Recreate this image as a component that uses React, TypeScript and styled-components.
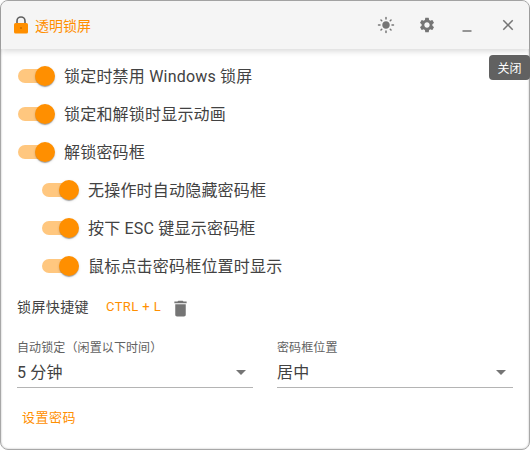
import React from "react";
import styled, { createGlobalStyle } from "styled-components";

const Global = createGlobalStyle`
  html, body { margin: 0; padding: 0; background: #fff; }
  body { width: 530px; height: 450px; overflow: hidden; font-family: Roboto, "Noto Sans CJK SC", sans-serif; }
`;

const Win = styled.div`
  position: relative;
  box-sizing: border-box;
  width: 530px;
  height: 450px;
  border: 1px solid #a8a8a8;
  border-radius: 8px;
  background: #fff;
  box-shadow: inset 0 0 2px rgba(0, 0, 0, 0.3);
  display: flex;
  flex-direction: column;
`;

const TitleBar = styled.header`
  flex: none;
  height: 48px;
  background: #f5f5f5;
  border-radius: 7px 7px 0 0;
  box-shadow: 0 2px 6px rgba(0, 0, 0, 0.16);
  display: flex;
  align-items: center;
  padding-left: 12px;
  position: relative;
  z-index: 1;
`;

const Title = styled.span`
  color: #ff8f00;
  font-size: 14px;
  margin-left: 6px;
  flex: 1;
`;

const IconSlot = styled.button<{ $w: number }>`
  border: 0;
  background: none;
  padding: 0;
  width: ${(p) => p.$w}px;
  height: 48px;
  display: flex;
  align-items: center;
  justify-content: center;
  color: #757575;
`;

const Tooltip = styled.div`
  position: absolute;
  top: 54px;
  right: -1px;
  width: 41px;
  height: 25px;
  border-radius: 4px;
  background: #616161;
  color: #fff;
  font-size: 12px;
  display: flex;
  align-items: center;
  justify-content: center;
  z-index: 2;
`;

const Body = styled.main`
  flex: 1;
  padding: 8px 15px 0 16px;
  display: flex;
  flex-direction: column;
`;

const Row = styled.label<{ $nested?: boolean }>`
  display: flex;
  align-items: center;
  height: 38px;
  padding-left: ${(p) => (p.$nested ? 25 : 1)}px;
  color: #424242;
  font-size: 16px;
  letter-spacing: 0.2px;
`;

const RowText = styled.span`
  margin-bottom: 2px;
`;

const Track = styled.span`
  position: relative;
  width: 34px;
  height: 14px;
  border-radius: 7px;
  background: #ffc77f;
  margin-right: 12px;
  flex: none;
`;

const Thumb = styled.span`
  position: absolute;
  right: -3px;
  top: -3px;
  width: 20px;
  height: 20px;
  border-radius: 50%;
  background: #ff8f00;
  box-shadow: 0 2px 1px -1px rgba(0,0,0,.2), 0 1px 1px rgba(0,0,0,.14), 0 1px 3px rgba(0,0,0,.12);
`;

const ShortcutRow = styled.div`
  display: flex;
  align-items: center;
  height: 38px;
  margin-top: 4px;
  font-size: 14px;
  letter-spacing: 0.4px;
  color: #424242;
`;

const ShortcutText = styled.span`
  margin-bottom: 4px;
`;

const Keys = styled.span`
  color: #ff8f00;
  font-size: 13px;
  letter-spacing: 0.4px;
  margin: 0 9px 3px 17px;
`;

const Fields = styled.div`
  display: grid;
  grid-template-columns: 236px 236px;
  column-gap: 24px;
  margin-top: 13px;
`;

const Field = styled.div`
  display: flex;
  flex-direction: column;
`;

const FieldLabel = styled.span`
  font-size: 12px;
  line-height: 16px;
  letter-spacing: 0.11px;
  color: #616161;
`;

const Select = styled.div`
  box-sizing: border-box;
  height: 32px;
  border-bottom: 1px solid #b4b4b4;
  display: flex;
  align-items: center;
  justify-content: space-between;
  font-size: 16px;
  letter-spacing: 0.15px;
  color: #424242;
`;

const SelectValue = styled.span`
  margin-bottom: 2px;
`;

const Link = styled.span`
  color: #ff8f00;
  font-size: 13px;
  letter-spacing: 0.5px;
  margin: 19px 0 0 5px;
`;

const Lock = () => (
  <svg width="16" height="18" viewBox="0 0 16 18">
    <path d="M4 8V5a4 4 0 0 1 8 0v3" fill="none" stroke="#5f5f5f" strokeWidth="1.6" />
    <rect x="1" y="7" width="14" height="10.5" rx="1.6" fill="#ff8f00" />
    <circle cx="8" cy="12" r="1" fill="#c96f00" />
  </svg>
);

const Sun = () => (
  <svg width="18" height="18" viewBox="0 0 24 24" fill="currentColor">
    <path d="M12 7c-2.76 0-5 2.24-5 5s2.24 5 5 5 5-2.24 5-5-2.24-5-5-5zM2 13h2c.55 0 1-.45 1-1s-.45-1-1-1H2c-.55 0-1 .45-1 1s.45 1 1 1zm18 0h2c.55 0 1-.45 1-1s-.45-1-1-1h-2c-.55 0-1 .45-1 1s.45 1 1 1zM11 2v2c0 .55.45 1 1 1s1-.45 1-1V2c0-.55-.45-1-1-1s-1 .45-1 1zm0 18v2c0 .55.45 1 1 1s1-.45 1-1v-2c0-.55-.45-1-1-1s-1 .45-1 1zM5.99 4.58a.996.996 0 0 0-1.41 0 .996.996 0 0 0 0 1.41l1.06 1.06c.39.39 1.03.39 1.41 0s.39-1.03 0-1.41L5.99 4.58zm12.37 12.37a.996.996 0 0 0-1.41 0 .996.996 0 0 0 0 1.41l1.06 1.06c.39.39 1.03.39 1.41 0a.996.996 0 0 0 0-1.41l-1.06-1.06zm1.06-10.96a.996.996 0 0 0 0-1.41.996.996 0 0 0-1.41 0l-1.06 1.06c-.39.39-.39 1.03 0 1.41s1.03.39 1.41 0l1.06-1.06zM7.05 18.36a.996.996 0 0 0 0-1.41.996.996 0 0 0-1.41 0l-1.06 1.06c-.39.39-.39 1.03 0 1.41s1.03.39 1.41 0l1.06-1.06z" />
  </svg>
);

const Gear = () => (
  <svg width="18" height="18" viewBox="0 0 24 24" fill="currentColor">
    <path d="M19.14 12.94c.04-.3.06-.61.06-.94 0-.32-.02-.64-.07-.94l2.03-1.58a.49.49 0 0 0 .12-.61l-1.92-3.32a.488.488 0 0 0-.59-.22l-2.39.96c-.5-.38-1.03-.7-1.62-.94l-.36-2.54a.484.484 0 0 0-.48-.41h-3.84c-.24 0-.43.17-.47.41l-.36 2.54c-.59.24-1.13.57-1.62.94l-2.39-.96c-.22-.08-.47 0-.59.22L2.74 8.87c-.12.21-.08.47.12.61l2.03 1.58c-.05.3-.09.63-.09.94s.02.64.07.94l-2.03 1.58a.49.49 0 0 0-.12.61l1.92 3.32c.12.22.37.29.59.22l2.39-.96c.5.38 1.03.7 1.62.94l.36 2.54c.05.24.24.41.48.41h3.84c.24 0 .44-.17.47-.41l.36-2.54c.59-.24 1.13-.56 1.62-.94l2.39.96c.22.08.47 0 .59-.22l1.92-3.32c.12-.22.07-.47-.12-.61l-2.01-1.58zM12 15.6c-1.98 0-3.6-1.62-3.6-3.6s1.62-3.6 3.6-3.6 3.6 1.62 3.6 3.6-1.62 3.6-3.6 3.6z" />
  </svg>
);

const Minimize = () => (
  <svg width="18" height="18" viewBox="0 0 24 24" fill="currentColor">
    <path d="M6 19h12v2H6z" />
  </svg>
);

const Close = () => (
  <svg width="18" height="18" viewBox="0 0 24 24" fill="currentColor">
    <path d="M19 6.41 17.59 5 12 10.59 6.41 5 5 6.41 10.59 12 5 17.59 6.41 19 12 13.41 17.59 19 19 17.59 13.41 12z" />
  </svg>
);

const Trash = () => (
  <svg width="21" height="21" viewBox="0 0 24 24" fill="#757575">
    <path d="M6 19c0 1.1.9 2 2 2h8c1.1 0 2-.9 2-2V7H6v12zM19 4h-3.5l-1-1h-5l-1 1H5v2h14V4z" />
  </svg>
);

const Caret = () => (
  <svg width="24" height="24" viewBox="0 0 24 24" fill="#757575">
    <path d="M7 10l5 5 5-5z" />
  </svg>
);

const Switch = () => (
  <Track>
    <Thumb />
  </Track>
);

const rows: [string, boolean][] = [
  ["锁定时禁用 Windows 锁屏", false],
  ["锁定和解锁时显示动画", false],
  ["解锁密码框", false],
  ["无操作时自动隐藏密码框", true],
  ["按下 ESC 键显示密码框", true],
  ["鼠标点击密码框位置时显示", true],
];

export default function App() {
  return (
    <Win>
      <Global />
      <TitleBar>
        <Lock />
        <Title>透明锁屏</Title>
        <IconSlot $w={41}><Sun /></IconSlot>
        <IconSlot $w={41}><Gear /></IconSlot>
        <IconSlot $w={40}><Minimize /></IconSlot>
        <IconSlot $w={42}><Close /></IconSlot>
      </TitleBar>
      <Tooltip>关闭</Tooltip>
      <Body>
        {rows.map(([text, nested]) => (
          <Row key={text} $nested={nested}>
            <Switch />
            <RowText>{text}</RowText>
          </Row>
        ))}
        <ShortcutRow>
          <ShortcutText>锁屏快捷键</ShortcutText>
          <Keys>CTRL + L</Keys>
          <Trash />
        </ShortcutRow>
        <Fields>
          <Field>
            <FieldLabel>自动锁定（闲置以下时间）</FieldLabel>
            <Select><SelectValue>5 分钟</SelectValue><Caret /></Select>
          </Field>
          <Field>
            <FieldLabel>密码框位置</FieldLabel>
            <Select><SelectValue>居中</SelectValue><Caret /></Select>
          </Field>
        </Fields>
        <Link>设置密码</Link>
      </Body>
    </Win>
  );
}
